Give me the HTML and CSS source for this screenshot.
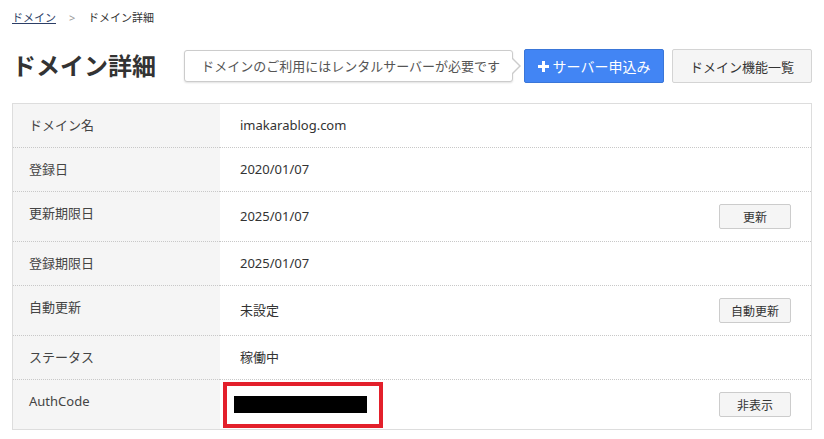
FILE: index.html
```html
<!DOCTYPE html>
<html>
  <head>
    <title>ドメイン詳細</title>
    <link rel="stylesheet" href="styles.css">
  </head>

  <body>
    <div class="page">
      <nav class="breadcrumb">
        <a href="#">ドメイン</a>
        <span class="sep">&gt;</span>
        <span>ドメイン詳細</span>
      </nav>

      <div class="page-head">
        <h1>ドメイン詳細</h1>
        <div class="head-actions">
          <div class="hint">ドメインのご利用にはレンタルサーバーが必要です</div>
          <a href="#" class="btn btn-primary">
            <svg class="plus" width="11" height="11" viewBox="0 0 11 11">
              <rect x="4" y="0" width="3" height="11" fill="#fff" />
              <rect x="0" y="4" width="11" height="3" fill="#fff" />
            </svg>サーバー申込み
          </a>
          <a href="#" class="btn btn-default">ドメイン機能一覧</a>
        </div>
      </div>

      <table class="detail">
        <tbody>
          <tr>
            <th>ドメイン名</th>
            <td><div class="cell">imakarablog.com</div></td>
          </tr>
          <tr>
            <th>登録日</th>
            <td><div class="cell">2020/01/07</div></td>
          </tr>
          <tr>
            <th>更新期限日</th>
            <td>
              <div class="cell">
                <span>2025/01/07</span>
                <button class="btn-small">更新</button>
              </div>
            </td>
          </tr>
          <tr>
            <th>登録期限日</th>
            <td><div class="cell">2025/01/07</div></td>
          </tr>
          <tr>
            <th>自動更新</th>
            <td>
              <div class="cell">
                <span>未設定</span>
                <button class="btn-small">自動更新</button>
              </div>
            </td>
          </tr>
          <tr>
            <th>ステータス</th>
            <td><div class="cell">稼働中</div></td>
          </tr>
          <tr>
            <th>AuthCode</th>
            <td class="auth">
              <div class="cell">
                <span></span>
                <button class="btn-small">非表示</button>
              </div>
              <div class="redact"><div class="redact-bar"></div></div>
            </td>
          </tr>
        </tbody>
      </table>
    </div>
  </body>
</html>
```

FILE: styles.css
```css
body {
  margin: 0;
  background-color: #fff;
  color: #333;
  font-family: "Noto Sans", "Noto Sans CJK JP", sans-serif;
  font-size: 13px;
}

.page {
  padding: 10px 12px 0;
}

.breadcrumb {
  font-size: 11px;
  line-height: 16px;
  color: #333;
}

.breadcrumb a {
  color: #2c3e66;
  text-decoration: underline;
}

.breadcrumb .sep {
  color: #999;
  margin: 0 10px;
}

.page-head {
  display: flex;
  justify-content: space-between;
  align-items: center;
  margin-top: 23px;
  margin-bottom: 20px;
}

.page-head h1 {
  margin: 0;
  font-size: 24px;
  font-weight: bold;
  color: #333;
  line-height: 34px;
}

.head-actions {
  display: flex;
  align-items: center;
}

.hint {
  position: relative;
  height: 30px;
  line-height: 30px;
  padding: 0 12px 0 16px;
  border: 1px solid #ccc;
  border-radius: 3px;
  background-color: #fff;
  box-shadow: 0 1px 2px rgba(0, 0, 0, 0.12);
  color: #555;
  margin-right: 11px;
  white-space: nowrap;
}

.hint::before,
.hint::after {
  content: "";
  position: absolute;
  top: 50%;
  width: 0;
  height: 0;
  border-style: solid;
}

.hint::before {
  right: -9px;
  margin-top: -8px;
  border-width: 8px 0 8px 8px;
  border-color: transparent transparent transparent #ccc;
}

.hint::after {
  right: -7px;
  margin-top: -7px;
  border-width: 7px 0 7px 7px;
  border-color: transparent transparent transparent #fff;
}

.btn {
  display: flex;
  align-items: center;
  justify-content: center;
  box-sizing: border-box;
  width: 140px;
  height: 34px;
  border-radius: 2px;
  text-decoration: none;
  font-size: 13px;
}

.btn-primary {
  background-color: #4285f4;
  border: 1px solid #3a76d8;
  color: #fff;
  font-size: 14px;
  margin-right: 8px;
}

.btn-primary .plus {
  margin-right: 4px;
}

.btn-default {
  background-color: #f5f5f5;
  border: 1px solid #d4d4d4;
  color: #333;
}

.detail {
  width: 100%;
  border-collapse: collapse;
  border: 1px solid #ddd;
  table-layout: fixed;
}

.detail tr + tr th,
.detail tr + tr td {
  border-top: 1px dotted #c8c8c8;
}

.detail th {
  width: 175px;
  padding: 12px 16px;
  background-color: #f5f5f5;
  text-align: left;
  font-weight: normal;
  vertical-align: top;
  line-height: 19px;
  color: #444;
}

.detail td {
  padding: 12px 20px;
  vertical-align: middle;
  line-height: 19px;
}

.cell {
  display: flex;
  justify-content: space-between;
  align-items: center;
  min-height: 19px;
}

.btn-small {
  width: 72px;
  height: 25px;
  background-color: #f5f5f5;
  border: 1px solid #ccc;
  border-radius: 2px;
  color: #333;
  font-family: "Noto Sans", "Noto Sans CJK JP", sans-serif;
  font-size: 12px;
  padding: 0;
}

.detail td.auth {
  position: relative;
}

.redact {
  position: absolute;
  left: 3px;
  top: 2px;
  width: 152px;
  height: 38px;
  border: 4px solid #e3202b;
}

.redact-bar {
  position: absolute;
  left: 7px;
  top: 10px;
  width: 133px;
  height: 17px;
  background-color: #000;
}
```
